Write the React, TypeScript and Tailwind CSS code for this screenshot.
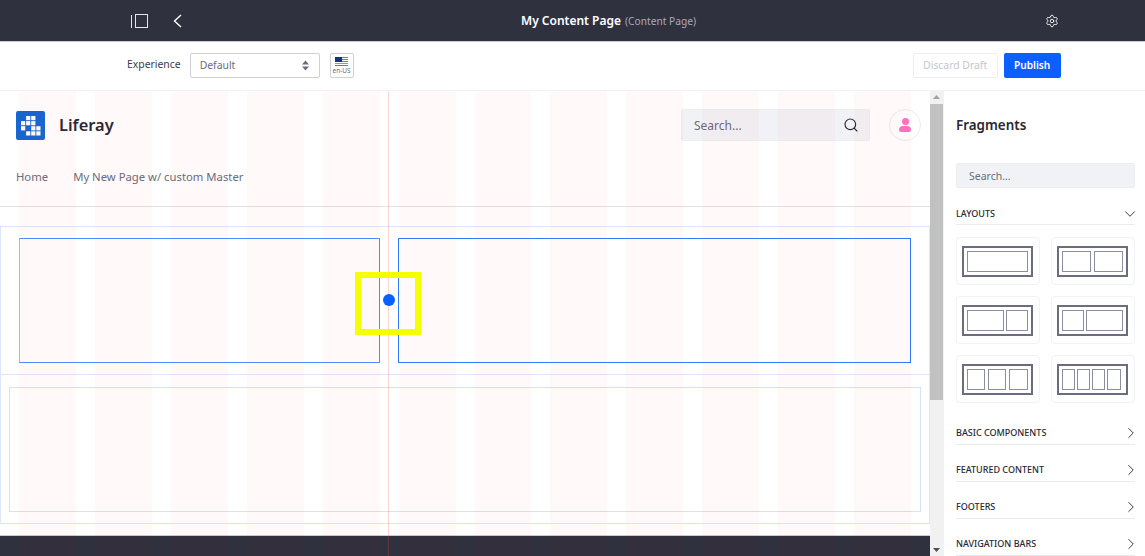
import { ChevronDown, ChevronRight, Search, Settings } from 'lucide-react';

const layouts = [
  [[5, 61]],
  [[5, 29], [37, 29]],
  [[5, 37], [44, 22]],
  [[5, 22], [29, 37]],
  [[5, 18], [26, 18], [47, 19]],
  [[5, 13], [20, 13], [35, 13], [50, 14]],
];

const collapsed = ['Basic Components', 'Featured Content', 'Footers', 'Navigation Bars'];

function LayoutIcon({ cols }: { cols: number[][] }) {
  return (
    <svg width="71" height="31" viewBox="0 0 71 31" fill="none" className="mr-[1px]">
      <rect x="1" y="1" width="69" height="29" stroke="#6b6c7e" strokeWidth="2" />
      {cols.map(([x, w]) => (
        <rect key={x} x={x + 0.5} y="5.5" width={w - 1} height="20" stroke="#8c8d9e" />
      ))}
    </svg>
  );
}

function LiferayLogo() {
  const cells = [
    [1, 0], [2, 0],
    [0, 1], [1, 1], [2, 1],
    [0, 2], [2, 2], [3, 2],
    [1, 3], [2, 3], [3, 3],
  ];
  return (
    <svg width="29" height="29" viewBox="0 0 29 29">
      <rect width="29" height="29" rx="2" fill="#1667d2" />
      {cells.map(([cx, cy]) => (
        <rect key={`${cx}-${cy}`} x={5 + cx * 5.1} y={5 + cy * 5.1} width="4.2" height="4.2" fill="#fff" />
      ))}
    </svg>
  );
}

function Flag() {
  return (
    <svg width="13" height="9" viewBox="0 0 13 9">
      <rect width="13" height="9" fill="#fff" />
      <rect y="0" width="13" height="1" fill="#d9535e" />
      <rect y="2" width="13" height="1" fill="#d9535e" />
      <rect y="4" width="13" height="1" fill="#d9535e" />
      <rect y="6" width="13" height="1" fill="#e3757d" />
      <rect y="8" width="13" height="1" fill="#d9535e" />
      <rect width="7" height="5" fill="#12308f" />
    </svg>
  );
}

export default function App() {
  return (
    <div className="relative flex h-[556px] w-[1145px] flex-col overflow-hidden bg-white font-['Noto_Sans',sans-serif] text-[#272833]">
      {/* top bar */}
      <div className="flex h-[42px] shrink-0 items-center border-b border-[#c9cad2] bg-[#30313f] text-white">
        <div className="flex w-[131px] shrink-0" />
        <svg width="17" height="14" viewBox="0 0 17 14" fill="none" stroke="#e4e4ea" strokeWidth="1">
          <path d="M0.5 1v13" />
          <rect x="4.5" y="0.5" width="12" height="13" />
        </svg>
        <svg width="9" height="14" viewBox="0 0 9 14" fill="none" stroke="#fff" strokeWidth="1.4" className="ml-[25px]">
          <path d="M8 1 1.5 7 8 13" />
        </svg>
        <div className="ml-[339px] flex items-baseline gap-1">
          <span className="text-[12px] font-semibold">My Content Page</span>
          <span className="text-[10.2px] text-[#a7a9bc]">(Content Page)</span>
        </div>
        <Settings size={14} strokeWidth={1.5} className="ml-[349px]" />
      </div>

      {/* experience toolbar */}
      <div className="flex h-[49px] shrink-0 items-center border-b border-[#f1f2f5] pb-[1px] pl-[127px]">
        <span className="mb-[2px] text-[10.4px] text-[#3b3c4a]">Experience</span>
        <div className="ml-[9px] flex h-[25px] w-[130px] items-center justify-between rounded-[2px] border border-[#cfd0db] pl-[9px] pr-[10px] text-[10.4px] text-[#6b6c7e]">
          <span className="mt-[1px]">Default</span>
          <svg width="7" height="11" viewBox="0 0 7 11" fill="#6b6c7e">
            <path d="M3.5 0.5 7 4.5H0zM3.5 10.5 0 6.5h7z" />
          </svg>
        </div>
        <div className="ml-[10px] flex h-[25px] w-[24px] flex-col items-center justify-center rounded-[2px] border border-[#cfd0db]">
          <Flag />
          <span className="text-[6.5px] leading-[9px] text-[#6b6c7e]">en-US</span>
        </div>
        <div className="ml-[559px] flex h-[25px] w-[85px] items-center justify-center rounded-[2px] border border-[#eeeff3] pt-[1px] text-[10.4px] text-[#c5c6d0]">
          Discard Draft
        </div>
        <div className="ml-[6px] flex h-[25px] w-[57px] items-center justify-center rounded-[2px] bg-[#0b5fff] pt-[1px] text-[10.2px] font-semibold text-white">
          Publish
        </div>
      </div>

      <div className="flex min-h-0 flex-1">
        {/* page canvas */}
        <div className="flex w-[930px] shrink-0 flex-col">
          <div className="flex h-[116px] shrink-0 flex-col border-b border-[#ecdfe8] pl-[16px]">
            <div className="flex items-center pt-[18px]">
              <LiferayLogo />
              <span className="ml-[14px] w-[56px] text-[16.4px] font-semibold text-[#272833]">Liferay</span>
              <div className="ml-[566px] flex h-[32px] w-[189px] items-center justify-between rounded-[2px] border border-[#eceef2] bg-[#f1f2f5] pl-[12px] pr-[10px] text-[12px] text-[#6b6c7e]">
                <span className="mt-[1px]">Search...</span>
                <Search size={16} strokeWidth={1.7} className="text-[#272833]" />
              </div>
              <div className="ml-[19px] flex h-[32px] w-[32px] flex-col items-center justify-center rounded-full border border-[#ecebef]">
                <span className="h-[7px] w-[7px] rounded-full bg-[#ff73c3]" />
                <span className="mt-[1px] h-[6px] w-[12px] rounded-t-[6px] rounded-b-[3px] bg-[#ff73c3]" />
              </div>
            </div>
            <div className="mt-[28px] flex gap-[25px] text-[11.3px] text-[#6b6c7e]">
              <span>Home</span>
              <span>My New Page w/ custom Master</span>
            </div>
          </div>

          <div className="h-[19px] shrink-0" />

          <div className="flex h-[149px] shrink-0 gap-[18px] border border-[#dbe6fb] pl-[18px] pr-[18px] pt-[11px]">
            <div className="h-[125px] w-[361px] border border-[#4c8dff] border-l-[#9fc0fa]" />
            <div className="h-[125px] w-[513px] border border-[#2e7bff]" />
          </div>

          <div className="h-[149px] shrink-0 border border-t-0 border-[#dbe6fb] pl-[8px] pt-[12px]">
            <div className="h-[125px] w-[912px] border border-[#d5e2fb]" />
          </div>

          <div className="h-[11px] shrink-0" />
          <div className="flex-1 border-t border-[#c9cad2] bg-[#30313f]" />
        </div>

        {/* scrollbar */}
        <div className="flex w-[13px] shrink-0 flex-col items-center bg-[#f1f1f1]">
          <svg width="7" height="13" viewBox="0 0 7 13" fill="#a3a3a3">
            <path d="M3.5 4 7 8H0z" />
          </svg>
          <div className="h-[296px] w-full bg-[#c1c1c1]" />
          <div className="flex-1" />
          <svg width="7" height="13" viewBox="0 0 7 13" fill="#505050">
            <path d="M3.5 9 0 5h7z" />
          </svg>
        </div>

        {/* fragments sidebar */}
        <div className="flex min-w-0 flex-1 flex-col border-l border-[#f1f2f5] pl-[12px] pr-[10px]">
          <div className="flex h-[72px] shrink-0 items-center pb-[3px] text-[13.4px] font-semibold text-[#272833]">
            Fragments
          </div>
          <div className="flex h-[25px] shrink-0 items-center rounded-[2px] border border-[#eceef2] bg-[#f1f2f5] pl-[12px] pt-[3px] text-[10.5px] text-[#6b6c7e]">
            Search...
          </div>
          <div className="mt-[19px] flex h-[18px] shrink-0 items-center justify-between border-b border-[#eaebf1] pb-[4px] text-[9px] font-medium uppercase text-[#272833]">
            Layouts
            <ChevronDown size={18} strokeWidth={1.2} className="mr-[-4px]" />
          </div>
          <div className="mt-[12px] grid shrink-0 grid-cols-2 gap-x-[11px] gap-y-[11px]">
            {layouts.map((cols, i) => (
              <div
                key={i}
                className="flex h-[48px] items-center justify-center rounded-[4px] border border-[#f1f2f5]"
              >
                <LayoutIcon cols={cols} />
              </div>
            ))}
          </div>
          <div className="mt-[21px] flex shrink-0 flex-col gap-[16px]">
            {collapsed.map((name) => (
              <div
                key={name}
                className="flex h-[21px] items-center justify-between border-b border-[#eaebf1] pb-[3px] text-[9px] font-medium uppercase text-[#272833]"
              >
                {name}
                <ChevronRight size={18} strokeWidth={1.2} className="mr-[-5px]" />
              </div>
            ))}
          </div>
        </div>
      </div>

      {/* grid overlay over the canvas */}
      <div className="pointer-events-none absolute left-[19px] top-[91px] grid h-[465px] w-[892px] grid-cols-12 gap-x-[19px]">
        {Array.from({ length: 12 }).map((_, i) => (
          <div key={i} className="bg-[rgba(255,0,0,0.025)]" />
        ))}
      </div>

      {/* centre guide */}
      <div className="pointer-events-none absolute left-[388px] top-[91px] h-[465px] w-px bg-[rgba(255,60,60,0.22)]" />

      {/* highlight and resize handle */}
      <div className="pointer-events-none absolute left-[355px] top-[272px] h-[63px] w-[66px] border-[6px] border-[#f5ff00]" />
      <div className="pointer-events-none absolute left-[383px] top-[294px] h-[12px] w-[12px] rounded-full bg-[#0b5fff]" />
    </div>
  );
}
